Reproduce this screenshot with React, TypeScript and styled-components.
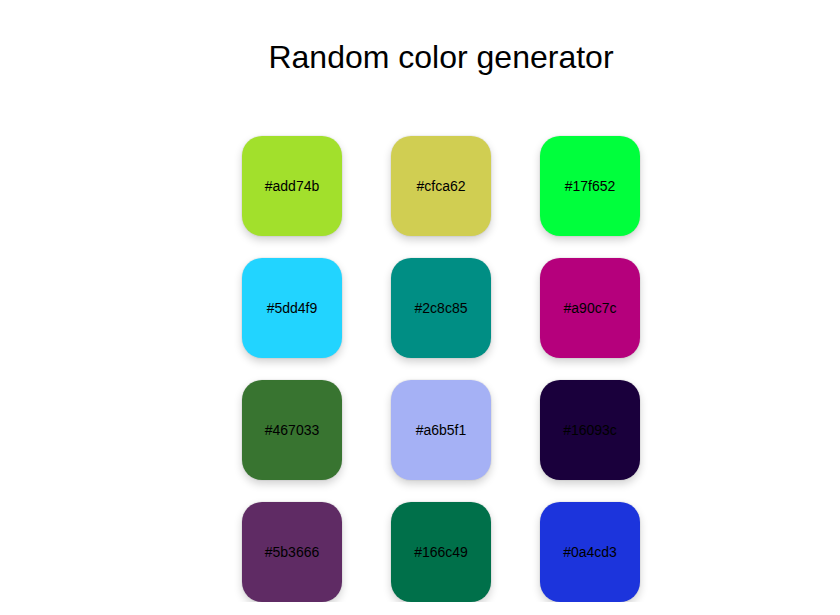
import React from "react";
import styled, { createGlobalStyle } from "styled-components";

const GlobalStyle = createGlobalStyle`
  html, body { margin: 0; padding: 0; background: #ffffff; }
  body { font-family: "Liberation Sans", Arial, sans-serif; color: #000; }
`;

const Page = styled.main`
  display: flex;
  flex-direction: column;
  align-items: center;
  padding: 39px 0 0 42px;
`;

const Title = styled.h1`
  margin: 0;
  font-size: 32px;
  font-weight: 400;
  line-height: 36px;
`;

const Grid = styled.div`
  display: grid;
  grid-template-columns: repeat(3, 100px);
  column-gap: 49px;
  row-gap: 22px;
  margin-top: 61px;
`;

const Swatch = styled.div<{ $bg: string }>`
  width: 100px;
  height: 100px;
  border-radius: 20px;
  background: ${(p) => p.$bg};
  box-shadow: 0 0 0 1px rgba(0, 0, 0, 0.04), 0 4px 9px rgba(0, 0, 0, 0.18);
  display: flex;
  align-items: center;
  justify-content: center;
  font-size: 14px;
  color: #000;
`;

const colors: { label: string; shown: string }[] = [
  { label: "#add74b", shown: "#a2e02c" },
  { label: "#cfca62", shown: "#d0ce52" },
  { label: "#17f652", shown: "#00ff3c" },
  { label: "#5dd4f9", shown: "#22d4ff" },
  { label: "#2c8c85", shown: "#008e84" },
  { label: "#a90c7c", shown: "#b5007c" },
  { label: "#467033", shown: "#387430" },
  { label: "#a6b5f1", shown: "#a5b1f5" },
  { label: "#16093c", shown: "#1a003c" },
  { label: "#5b3666", shown: "#5f2b64" },
  { label: "#166c49", shown: "#00704a" },
  { label: "#0a4cd3", shown: "#1c34dc" },
];

export default function App() {
  return (
    <>
      <GlobalStyle />
      <Page>
        <Title>Random color generator</Title>
        <Grid>
          {colors.map((c) => (
            <Swatch key={c.label} $bg={c.shown}>
              {c.label}
            </Swatch>
          ))}
        </Grid>
      </Page>
    </>
  );
}
